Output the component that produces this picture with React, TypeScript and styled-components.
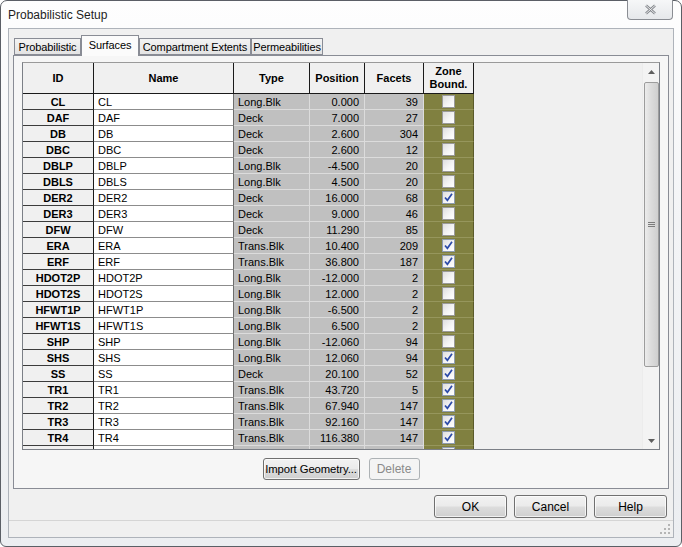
import React from 'react';
import styled, { createGlobalStyle } from 'styled-components';

const GlobalStyle = createGlobalStyle`
  html, body {
    margin: 0;
    padding: 0;
    background: #ffffff;
  }
  body {
    font-family: "Liberation Sans", Arial, sans-serif;
    color: #000;
  }
  * {
    box-sizing: border-box;
  }
`;

const Window = styled.div`
  width: 682px;
  height: 547px;
  display: flex;
  flex-direction: column;
  padding: 0 7px 8px;
  border: 1px solid #5b5f66;
  border-radius: 7px 7px 6px 6px;
  background: linear-gradient(to bottom, #fefefe 0%, #f3f4f6 40%, #eceef1 100%);
`;

const TitleBar = styled.div`
  height: 27px;
  flex: none;
  display: flex;
  align-items: flex-start;
  justify-content: space-between;
`;

const TitleText = styled.span`
  margin-top: 7px;
  font-size: 12px;
  color: #1e1e1e;
`;

const CloseButton = styled.div`
  width: 46px;
  height: 20px;
  margin-top: -1px;
  margin-right: 1px;
  display: flex;
  align-items: center;
  justify-content: center;
  border: 1px solid #8a8d93;
  border-top: none;
  border-radius: 0 0 4px 4px;
  background: linear-gradient(to bottom, #f6f7f8, #e6e8eb);
`;

const Client = styled.div`
  flex: 1;
  display: flex;
  flex-direction: column;
  padding: 6px 0 0;
  border: 1px solid #aeb3ba;
  background: #f0f0f0;
`;

const TabStrip = styled.div`
  height: 20px;
  flex: none;
  display: flex;
  align-items: flex-end;
  margin: 0 4px;
  padding-left: 1px;
`;

const Tab = styled.div<{ $active?: boolean; $width: number }>`
  width: ${(p) => p.$width}px;
  height: ${(p) => (p.$active ? 21 : 17)}px;
  margin-bottom: ${(p) => (p.$active ? -1 : 0)}px;
  position: relative;
  z-index: ${(p) => (p.$active ? 1 : 0)};
  display: flex;
  align-items: center;
  justify-content: center;
  padding-bottom: ${(p) => (p.$active ? 3 : 0)}px;
  font-size: 11px;
  white-space: nowrap;
  letter-spacing: -0.1px;
  border: 1px solid #898c95;
  border-bottom: ${(p) => (p.$active ? 'none' : '1px solid #898c95')};
  background: ${(p) =>
    p.$active ? '#fbfbfb' : 'linear-gradient(to bottom, #f3f3f3, #e3e3e3)'};
`;

const Panel = styled.div`
  height: 434px;
  flex: none;
  margin: 0 4px;
  display: flex;
  flex-direction: column;
  padding: 6px 8px 8px;
  border: 1px solid #898c95;
  background: #f6f6f6;
`;

const GridBox = styled.div`
  height: 388px;
  flex: none;
  display: flex;
  border: 1px solid #7b7f86;
  border-top-color: #9a9a9a;
  background: #f0f0f0;
`;

const Viewport = styled.div`
  flex: 1;
  overflow: hidden;
`;

const Row = styled.div`
  display: flex;
`;

const HeadCell = styled.div<{ $width: number }>`
  width: ${(p) => p.$width}px;
  height: 31px;
  flex: none;
  display: flex;
  align-items: center;
  justify-content: center;
  text-align: center;
  font-size: 11px;
  font-weight: bold;
  line-height: 13px;
  background: #f0f0f0;
  border-right: 1px solid #1a1a1a;
  border-bottom: 1px solid #1a1a1a;
`;

const Cell = styled.div<{
  $width: number;
  $bg: string;
  $line: string;
  $edge?: string;
  $align: 'left' | 'center' | 'right';
  $bold?: boolean;
}>`
  width: ${(p) => p.$width}px;
  height: 16px;
  flex: none;
  display: flex;
  align-items: center;
  justify-content: ${(p) =>
    p.$align === 'left' ? 'flex-start' : p.$align === 'right' ? 'flex-end' : 'center'};
  padding: 0 ${(p) => (p.$align === 'right' ? 5 : 0)}px 0
    ${(p) => (p.$align === 'left' ? 4 : 0)}px;
  font-size: 11px;
  font-weight: ${(p) => (p.$bold ? 'bold' : 'normal')};
  white-space: nowrap;
  background: ${(p) => p.$bg};
  border-bottom: 1px solid ${(p) => p.$line};
  border-right: 1px solid ${(p) => p.$edge || p.$line};
`;

const Check = styled.div<{ $checked: boolean }>`
  width: 13px;
  height: 13px;
  display: flex;
  align-items: center;
  justify-content: center;
  border: 1px solid ${(p) => (p.$checked ? '#8f9cb0' : '#9a9a9a')};
  background: linear-gradient(135deg, #dedede 0%, #f4f4f4 55%, #ffffff 100%);
`;

const Scrollbar = styled.div`
  width: 17px;
  flex: none;
  display: flex;
  flex-direction: column;
  align-items: center;
  background: #f3f3f3;
  border-left: 1px solid #ececec;
`;

const ArrowBox = styled.div`
  width: 17px;
  height: 17px;
  flex: none;
  display: flex;
  align-items: center;
  justify-content: center;
`;

const Thumb = styled.div`
  width: 15px;
  height: 285px;
  margin-top: 2px;
  display: flex;
  align-items: center;
  justify-content: center;
  border: 1px solid #9c9c9c;
  border-radius: 2px;
  background: linear-gradient(to right, #ececec 0%, #dcdcdc 45%, #cfcfcf 100%);
`;

const Track = styled.div`
  flex: 1;
`;

const PanelButtons = styled.div`
  margin-top: 8px;
  display: flex;
  justify-content: center;
  gap: 9px;
`;

const WinButton = styled.div<{ $width: number; $height?: number; $disabled?: boolean }>`
  width: ${(p) => p.$width}px;
  height: ${(p) => p.$height || 22}px;
  display: flex;
  align-items: center;
  justify-content: center;
  font-size: 12px;
  white-space: nowrap;
  color: ${(p) => (p.$disabled ? '#8a8a8a' : '#000')};
  border: 1px solid ${(p) => (p.$disabled ? '#adb2b5' : '#707070')};
  border-radius: 3px;
  background: ${(p) =>
    p.$disabled
      ? '#f4f4f4'
      : 'linear-gradient(to bottom, #f2f2f2 0%, #ebebeb 48%, #dddddd 52%, #cfcfcf 100%)'};
  box-shadow: ${(p) => (p.$disabled ? 'none' : 'inset 0 0 0 1px rgba(255,255,255,0.7)')};
`;

const CompactLabel = styled.span`
  font-size: 11.3px;
  letter-spacing: -0.1px;
`;

const DialogButtons = styled.div`
  margin-top: 6px;
  padding-right: 6px;
  display: flex;
  justify-content: flex-end;
  gap: 7px;
`;

const StatusStrip = styled.div`
  margin-top: 2px;
  flex: 1;
  display: flex;
  justify-content: flex-end;
  align-items: flex-end;
  padding: 0 2px 2px 0;
  border-top: 1px solid #d5d5d5;
  background: #f0f0f0;
`;

type Surface = [string, string, string, number, boolean];

const surfaces: Surface[] = [
  ['CL', 'Long.Blk', '0.000', 39, false],
  ['DAF', 'Deck', '7.000', 27, false],
  ['DB', 'Deck', '2.600', 304, false],
  ['DBC', 'Deck', '2.600', 12, false],
  ['DBLP', 'Long.Blk', '-4.500', 20, false],
  ['DBLS', 'Long.Blk', '4.500', 20, false],
  ['DER2', 'Deck', '16.000', 68, true],
  ['DER3', 'Deck', '9.000', 46, false],
  ['DFW', 'Deck', '11.290', 85, false],
  ['ERA', 'Trans.Blk', '10.400', 209, true],
  ['ERF', 'Trans.Blk', '36.800', 187, true],
  ['HDOT2P', 'Long.Blk', '-12.000', 2, false],
  ['HDOT2S', 'Long.Blk', '12.000', 2, false],
  ['HFWT1P', 'Long.Blk', '-6.500', 2, false],
  ['HFWT1S', 'Long.Blk', '6.500', 2, false],
  ['SHP', 'Long.Blk', '-12.060', 94, false],
  ['SHS', 'Long.Blk', '12.060', 94, true],
  ['SS', 'Deck', '20.100', 52, true],
  ['TR1', 'Trans.Blk', '43.720', 5, true],
  ['TR2', 'Trans.Blk', '67.940', 147, true],
  ['TR3', 'Trans.Blk', '92.160', 147, true],
  ['TR4', 'Trans.Blk', '116.380', 147, true],
  ['TR5', 'Trans.Blk', '140.600', 147, true],
];

const W = { id: 71, name: 140, type: 76, pos: 55, facets: 59, zone: 50 };

const GRAY = '#c0c0c0';
const OLIVE = '#808040';

const CloseGlyph = () => (
  <svg width="13" height="11" viewBox="0 0 13 11">
    <path d="M2 1.5 L11 9.5 M11 1.5 L2 9.5" stroke="#85888d" strokeWidth="2.6" />
    <path d="M2 1.5 L11 9.5 M11 1.5 L2 9.5" stroke="#f4f5f6" strokeWidth="0.9" />
  </svg>
);

const CheckMark = () => (
  <svg width="11" height="11" viewBox="0 0 11 11">
    <path d="M2 5.5 L4.4 8.3 L9 1.8" fill="none" stroke="#2b4aa8" strokeWidth="1.7" />
  </svg>
);

const Triangle = ({ up }: { up?: boolean }) => (
  <svg width="7" height="4" viewBox="0 0 7 4">
    <path d={up ? 'M0 4 L3.5 0 L7 4 Z' : 'M0 0 L3.5 4 L7 0 Z'} fill="#5e5e5e" />
  </svg>
);

const Grip = () => (
  <svg width="7" height="6" viewBox="0 0 7 6">
    <path d="M0 0.5 H7 M0 2.5 H7 M0 4.5 H7" stroke="#7c7c7c" strokeWidth="1" />
  </svg>
);

const SizeGrip = () => (
  <svg width="11" height="11" viewBox="0 0 11 11">
    {[
      [8, 0],
      [8, 4],
      [4, 4],
      [8, 8],
      [4, 8],
      [0, 8],
    ].map(([x, y]) => (
      <rect key={`${x}-${y}`} x={x} y={y} width="2" height="2" fill="#b5b5b5" />
    ))}
  </svg>
);

const App: React.FC = () => {
  return (
    <>
      <GlobalStyle />
      <Window>
        <TitleBar>
          <TitleText>Probabilistic Setup</TitleText>
          <CloseButton>
            <CloseGlyph />
          </CloseButton>
        </TitleBar>
        <Client>
          <TabStrip>
            <Tab $width={67}>Probabilistic</Tab>
            <Tab $width={58} $active>
              Surfaces
            </Tab>
            <Tab $width={112}>Compartment Extents</Tab>
            <Tab $width={72}>Permeabilities</Tab>
          </TabStrip>
          <Panel>
            <GridBox>
              <Viewport>
                <Row>
                  <HeadCell $width={W.id}>ID</HeadCell>
                  <HeadCell $width={W.name}>Name</HeadCell>
                  <HeadCell $width={W.type}>Type</HeadCell>
                  <HeadCell $width={W.pos}>Position</HeadCell>
                  <HeadCell $width={W.facets}>Facets</HeadCell>
                  <HeadCell $width={W.zone}>
                    Zone
                    <br />
                    Bound.
                  </HeadCell>
                </Row>
                {surfaces.map(([id, type, pos, facets, zone]) => (
                  <Row key={id}>
                    <Cell $width={W.id} $bg="#f0f0f0" $line="#3c3c3c" $edge="#1a1a1a" $align="center" $bold>
                      {id}
                    </Cell>
                    <Cell $width={W.name} $bg="#ffffff" $line="#8c8c8c" $edge="#6e6e6e" $align="left">
                      {id}
                    </Cell>
                    <Cell $width={W.type} $bg={GRAY} $line="#dcdcdc" $align="left">
                      {type}
                    </Cell>
                    <Cell $width={W.pos} $bg={GRAY} $line="#dcdcdc" $align="right">
                      {pos}
                    </Cell>
                    <Cell $width={W.facets} $bg={GRAY} $line="#dcdcdc" $align="right">
                      {facets}
                    </Cell>
                    <Cell $width={W.zone} $bg={OLIVE} $line="#96965c" $edge="#5a5a2a" $align="center">
                      <Check $checked={zone}>{zone && <CheckMark />}</Check>
                    </Cell>
                  </Row>
                ))}
              </Viewport>
              <Scrollbar>
                <ArrowBox>
                  <Triangle up />
                </ArrowBox>
                <Thumb>
                  <Grip />
                </Thumb>
                <Track />
                <ArrowBox>
                  <Triangle />
                </ArrowBox>
              </Scrollbar>
            </GridBox>
            <PanelButtons>
              <WinButton $width={97}>
                <CompactLabel>Import Geometry...</CompactLabel>
              </WinButton>
              <WinButton $width={51} $disabled>
                Delete
              </WinButton>
            </PanelButtons>
          </Panel>
          <DialogButtons>
            <WinButton $width={73} $height={23}>
              OK
            </WinButton>
            <WinButton $width={73} $height={23}>
              Cancel
            </WinButton>
            <WinButton $width={73} $height={23}>
              Help
            </WinButton>
          </DialogButtons>
          <StatusStrip>
            <SizeGrip />
          </StatusStrip>
        </Client>
      </Window>
    </>
  );
};

export default App;
